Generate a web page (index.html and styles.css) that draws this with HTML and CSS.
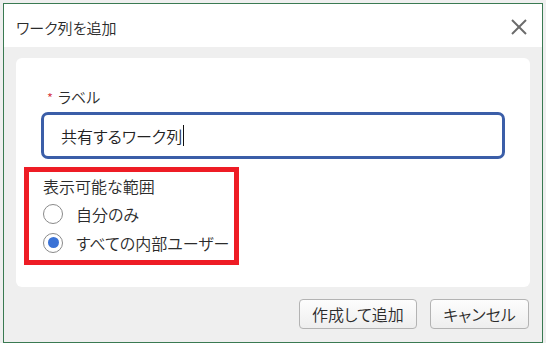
FILE: index.html
```html
<!DOCTYPE html>
<html lang="ja">
<head>
  <meta charset="UTF-8" />
  <meta name="viewport" content="width=device-width, initial-scale=1.0"/>
  <title>ワーク列を追加</title>
  <link rel="stylesheet" href="styles.css">
</head>
<body>

<div class="dialog">
  <div class="dialog-header">
    <span class="dialog-title">ワーク列を追加</span>
    <span class="close-btn">
      <svg width="16" height="16" viewBox="0 0 16 16">
        <line x1="1" y1="1" x2="15" y2="15" stroke="#6b6b6b" stroke-width="2"/>
        <line x1="15" y1="1" x2="1" y2="15" stroke="#6b6b6b" stroke-width="2"/>
      </svg>
    </span>
  </div>

  <div class="dialog-body">
    <div class="card">
      <div class="field">
        <label class="field-label"><span class="required">*</span>ラベル</label>
        <div class="text-input">共有するワーク列<span class="caret"></span></div>
      </div>

      <div class="scope-group">
        <div class="scope-title">表示可能な範囲</div>
        <div class="radio-row">
          <span class="radio"></span>
          <span>自分のみ</span>
        </div>
        <div class="radio-row">
          <span class="radio checked"></span>
          <span>すべての内部ユーザー</span>
        </div>
      </div>
    </div>

    <div class="dialog-footer">
      <button class="btn btn-create">作成して追加</button>
      <button class="btn btn-cancel">キャンセル</button>
    </div>
  </div>
</div>

</body>
</html>
```

FILE: styles.css
```css
body {
  margin: 0;
  padding: 3px;
  background-color: #efefef;
  font-family: "Noto Sans CJK JP", "Noto Sans", sans-serif;
  font-feature-settings: "palt";
  font-weight: 350;
  color: #2b2b2b;
}
.dialog {
  width: 538px;
  height: 338px;
  border: 1px solid #3a7a52;
  background: #efefef;
  display: flex;
  flex-direction: column;
}
.dialog-header {
  height: 43px;
  background: #fff;
  display: flex;
  align-items: center;
  justify-content: space-between;
  padding: 0 15px 0 12px;
}
.dialog-title {
  font-size: 15px;
  line-height: 20px;
  margin-top: 5px;
}
.close-btn {
  display: flex;
  margin-top: 2px;
}
.dialog-body {
  padding: 11px 12px 13px 12px;
}
.card {
  background: #fff;
  border-radius: 6px;
  height: 229px;
  box-sizing: border-box;
  padding: 29px 8px 0 8px;
}
.field {
  margin: 0 17px;
}
.field-label {
  display: block;
  font-size: 15px;
  line-height: 20px;
  padding-left: 6px;
}
.required {
  color: #d6343c;
  font-size: 13px;
  margin-right: 5px;
}
.text-input {
  margin-top: 4px;
  height: 41px;
  border: 3px solid #3b5ea8;
  border-radius: 7px;
  padding-left: 17px;
  display: flex;
  align-items: center;
  font-size: 16px;
  color: #222;
}
.caret {
  display: inline-block;
  width: 1px;
  height: 21px;
  background: #111;
  margin-left: 1px;
}
.scope-group {
  margin-top: 8px;
  width: 191px;
  border: 5px solid #ee1c25;
  padding: 4px 0 3px 14px;
}
.scope-title {
  font-size: 16px;
  line-height: 20px;
  margin-bottom: 3px;
}
.radio-row {
  height: 29px;
  display: flex;
  align-items: center;
  gap: 13px;
  font-size: 16px;
}
.radio {
  width: 18px;
  height: 18px;
  border: 1px solid #8a8a8a;
  border-radius: 50%;
  background: #fff;
  display: flex;
  align-items: center;
  justify-content: center;
}
.radio.checked::after {
  content: "";
  width: 11px;
  height: 11px;
  border-radius: 50%;
  background: #3a72d6;
}
.dialog-footer {
  margin-top: 12px;
  margin-right: 1px;
  display: flex;
  justify-content: flex-end;
  gap: 13px;
}
.btn {
  height: 30px;
  border: 1px solid #b3b3b3;
  border-radius: 4px;
  background: linear-gradient(#fdfdfd, #eeeeee);
  font-family: inherit;
  font-feature-settings: "palt";
  font-weight: 350;
  font-size: 16px;
  color: #2b2b2b;
  padding: 0;
}
.btn-create {
  width: 118px;
}
.btn-cancel {
  width: 99px;
}
```
